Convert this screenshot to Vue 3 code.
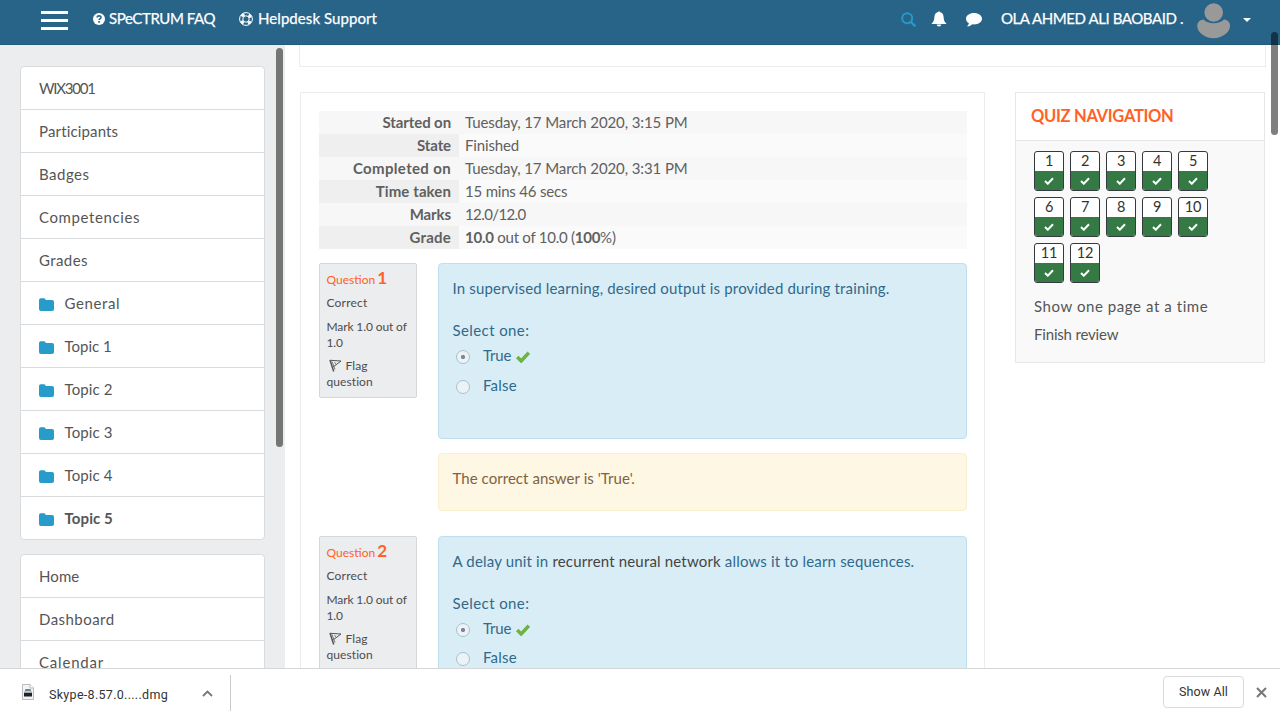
<script setup>
// Each label carries its own tracking in pixels.
const courseLinks = [['WIX3001', -1.2], ['Participants', 0.15], ['Badges', 0.5], ['Competencies', 0.6], ['Grades', 0.4]]
const topics = [['General', 0.6], ['Topic 1', 0], ['Topic 2', 0.1], ['Topic 3', 0.1], ['Topic 4', 0.1], ['Topic 5', 0.1]]
const siteLinks = [['Home', 0.1], ['Dashboard', 0.45], ['Calendar', 0.8]]
const summary = [
  ['Started on', -0.1, 'Tuesday, 17 March 2020, 3:15 PM', -0.1],
  ['State', -0.1, 'Finished', -0.15],
  ['Completed on', 0.35, 'Tuesday, 17 March 2020, 3:31 PM', -0.1],
  ['Time taken', 0.1, '15 mins 46 secs', -0.2],
  ['Marks', -0.1, '12.0/12.0', -0.6],
]
const questions = [
  { n: 1, parts: ['In supervised learning, desired output is provided during training.', '', ''] },
  { n: 2, parts: ['A delay unit in ', 'recurrent neural network', ' allows it to learn sequences.'] },
]
const track = (v) => ({ letterSpacing: v + 'px' })
</script>

<template>
  <div class="window">
    <header class="topbar">
      <div class="burger"><i></i><i></i><i></i></div>
      <div class="toplink faq">
        <svg width="12" height="12" viewBox="0 0 12 12"><circle cx="6" cy="6" r="6" fill="#fff" /><path d="M4 4.5C4.2 2.3 8 2.3 8 4.4C8 5.7 6.1 5.5 6.1 7.1" fill="none" stroke="#276488" stroke-width="1.6" /><rect x="5.2" y="8" width="1.7" height="1.7" fill="#276488" /></svg>
        <span>SPeCTRUM FAQ</span>
      </div>
      <div class="toplink help">
        <svg width="14" height="14" viewBox="0 0 14 14" fill="none" stroke="#fff"><circle cx="7" cy="7" r="6.4" stroke-width="1" /><circle cx="7" cy="7" r="3.2" stroke-width="1" /><circle cx="7" cy="7" r="4.8" stroke-width="2.8" stroke-dasharray="3.2 4.34" stroke-dashoffset="-2.17" /></svg>
        <span>Helpdesk Support</span>
      </div>
      <div class="userarea">
        <svg class="search" width="15" height="15" viewBox="0 0 15 15" fill="none" stroke="#2799c7" stroke-width="2"><circle cx="6.2" cy="6.2" r="5" /><path d="M9.8 9.8L13.6 13.6" stroke-width="2.5" stroke-linecap="round" /></svg>
        <svg class="bell" width="16" height="16" viewBox="0 0 16 16" fill="#fff"><path d="M7.2 1a.8.8 0 0 1 1.6 0c2.8.5 3.6 2.5 3.800 5 .2 3.200.9 5 2.700 6.500V13H.7v-.5C2.500 11 3.200 9.200 3.400 6c.2-2.500 1-4.500 3.800-5z" /><path d="M5.700 13.500h4.600a2.300 2 0 0 1-4.600 0z" /></svg>
        <svg class="chat" width="16" height="14" viewBox="0 0 16 14" fill="#fff"><path d="M8 0C12.500 0 16 2.500 16 5.700S12.500 11.400 8 11.400c-.6 0-1.100 0-1.600-.1-1.400 1.300-3 2-4.700 2.200-.5 0-.5-.5-.2-.7.900-.8 1.300-1.600 1.400-2.500C1.100 9.200 0 7.600 0 5.700 0 2.500 3.500 0 8 0z" /></svg>
        <span class="username">OLA AHMED ALI BAOBAID .</span>
        <svg class="avatar" width="34" height="36" viewBox="0 0 34 36" fill="#999"><circle cx="16.700" cy="9.500" r="9.300" /><path d="M6.500 16.500C9 19 12.500 20.300 16.700 20.300S24.500 19 27 16.500C31 17 33 19.500 33 23c0 6.500-8 12.200-16.500 12.200S.3 29.500.3 23c0-3.500 2.200-6 6.200-6.500z" /></svg>
        <i class="caret"></i>
      </div>
    </header>

    <div class="body">
      <aside class="sidebar">
        <nav class="menu">
          <div v-for="l in courseLinks" :key="l[0]" class="row" :style="track(l[1])">{{ l[0] }}</div>
          <div v-for="t in topics" :key="t[0]" class="row" :class="{ current: t[0] === 'Topic 5' }" :style="track(t[1])">
            <svg width="15" height="13" viewBox="0 0 15 13"><path d="M0 2Q0 .3 1.700.3H5Q6.700.3 6.700 2H13Q15 2 15 4v7q0 2-2 2H2q-2 0-2-2z" fill="#279bc9" /></svg>
            <span>{{ t[0] }}</span>
          </div>
        </nav>
        <nav class="menu">
          <div v-for="l in siteLinks" :key="l[0]" class="row" :style="track(l[1])">{{ l[0] }}</div>
        </nav>
        <i class="sidescroll"></i>
      </aside>

      <main class="page">
        <div class="heading-card"></div>
        <div class="columns">
          <section class="quiz">
            <table class="summary">
              <tbody>
                <tr v-for="s in summary" :key="s[0]"><th :style="track(s[1])">{{ s[0] }}</th><td :style="track(s[3])">{{ s[2] }}</td></tr>
                <tr><th>Grade</th><td class="grade"><b>10.0</b> out of 10.0 (<b>100</b>%)</td></tr>
              </tbody>
            </table>
            <div v-for="q in questions" :key="q.n" class="question" :class="'q' + q.n">
              <div class="info">
                <h3>Question <b>{{ q.n }}</b></h3>
                <p class="state">Correct</p>
                <p class="mark">Mark 1.0 out of<br>1.0</p>
                <p class="flag"><svg width="13" height="13" viewBox="0 0 13 13" fill="none" stroke="#555"><path d="M1 1L4.700 12.500" stroke-width="1.500" /><path d="M1.500 1.300L12 2L4.300 7.800" /><path d="M3 2.500L6 10.500" stroke-width=".8" /><path d="M5.500 3L7 5.500" stroke-width=".7" /></svg><span>Flag</span><br>question</p>
              </div>
              <div class="content">
                <div class="formulation">
                  <p class="qtext"><span>{{ q.parts[0] }}</span><em>{{ q.parts[1] }}</em><span>{{ q.parts[2] }}</span></p>
                  <p class="prompt">Select one:</p>
                  <div class="answer">
                    <i class="radio on"></i><span class="true">True</span>
                    <svg width="14" height="12" viewBox="0 0 14 12"><path d="M1.200 6L5.200 10L12.800 1.700" fill="none" stroke="#6cb33f" stroke-width="3.400" /></svg>
                  </div>
                  <div class="answer second"><i class="radio"></i><span>False</span></div>
                </div>
                <div class="outcome">The correct answer is 'True'.</div>
              </div>
            </div>
          </section>

          <section class="quiznav">
            <h2>QUIZ NAVIGATION</h2>
            <div class="navbody">
              <div class="buttons">
                <div v-for="n in 12" :key="n" class="qbtn">
                  <span>{{ n }}</span>
                  <div><svg width="10" height="8" viewBox="0 0 10 8"><path d="M1 4L3.800 6.700L9 1.200" fill="none" stroke="#fff" stroke-width="2" /></svg></div>
                </div>
              </div>
              <p class="navlink">Show one page at a time</p>
              <p class="navlink last">Finish review</p>
            </div>
          </section>
        </div>
      </main>
    </div>

    <i class="pagescroll"></i>

    <footer class="downloads">
      <div class="item">
        <svg width="12" height="16" viewBox="0 0 12 16"><path d="M.5.500H8L11.500 4V15.500H.5z" fill="#f4f4f4" stroke="#bbb" /><path d="M8 .5V4H11.500" fill="#fff" stroke="#bbb" /><path d="M3.500 5h5l1.300 4H2.200z" fill="#777e84" /><path d="M3.500 7h5l.7 1.500H2.800z" fill="#c7d4db" /><rect x="2" y="9" width="8" height="3.500" fill="#222" /><rect x="3" y="12" width="6" height="1" fill="#888" /></svg>
        <span class="filename">Skype-8.57.0.....dmg</span>
        <svg class="up" width="11" height="7" viewBox="0 0 11 7"><path d="M1 6L5.500 1.500L10 6" fill="none" stroke="#777" stroke-width="1.800" /></svg>
      </div>
      <div class="showall">Show All</div>
      <svg class="close" width="11" height="11" viewBox="0 0 11 11"><path d="M1 1L10 10M10 1L1 10" stroke="#777" stroke-width="2" /></svg>
    </footer>
  </div>
</template>

<style>
html, body { overflow: hidden; }
</style>

<style scoped>
* { box-sizing: border-box; }
.window { position: relative; width: 1280px; height: 717px; overflow: hidden; display: flex; flex-direction: column; background: #fff; color: #555; font: 15px/23px Lato, "Liberation Sans", sans-serif; letter-spacing: .2px; white-space: nowrap; }
p, h2, h3 { margin: 0; font-weight: normal; }
svg { display: block; flex: none; }

.topbar { height: 45px; flex: none; background: #276488; color: #fff; display: flex; align-items: flex-start; padding-left: 41px; border-bottom: 1px solid #235a7b; }
.burger { width: 27px; margin-top: 11px; display: flex; flex-direction: column; gap: 5px; }
.burger i { height: 3px; background: #fff; }
.toplink { display: flex; align-items: center; height: 23px; margin-top: 7px; gap: 4px; letter-spacing: .07px; -webkit-text-stroke: .25px #fff; }
.faq { margin-left: 25px; width: 146px; letter-spacing: -.42px; }
.help { gap: 5px; }
.userarea { margin-left: auto; display: flex; width: 379px; align-items: flex-start; }
.search { margin-top: 12px; }
.bell { margin: 11px 0 0 15px; }
.chat { margin: 13px 0 0 19px; }
.username { margin: 7px 0 0 19px; width: 196px; letter-spacing: -.42px; -webkit-text-stroke: .25px #fff; }
.avatar { margin-top: 3px; }
.caret { margin: 18px 0 0 12px; border: 4px solid transparent; border-top-color: #fff; border-bottom: 0; }

.body { flex: 1; min-height: 0; display: flex; overflow: hidden; }
.sidebar { position: relative; width: 285px; flex: none; background: #ecedef; padding: 21px 20px 0; overflow: hidden; }
.menu { width: 245px; border: 1px solid #dadbdc; border-radius: 4px; background: #fff; margin-bottom: 14px; }
.row { height: 43px; padding: 0 18px; display: flex; align-items: center; border-bottom: 1px solid #dadbdc; }
.row:last-child { height: 42px; border-bottom: 0; }
.row svg { margin: 2px 10.500px 0 0; }
.current { font-weight: bold; }
.sidescroll { position: absolute; left: 276px; top: 3px; width: 7px; height: 399px; border-radius: 4px; background: #747675; }

.page { flex: 1; padding-left: 14px; }
.heading-card { width: 967px; height: 22px; border: 1px solid #ebecec; border-top: 0; }
.columns { display: flex; gap: 30px; align-items: flex-start; padding: 25px 0 0 1px; }
.quiz { width: 685px; height: 900px; border: 1px solid #ebecec; padding: 18px 17px 0 18px; }
.summary { width: 648px; border-collapse: collapse; color: #606060; }
.summary tr { height: 23px; background: #f7f7f7; }
.summary tr:nth-child(even) { background: #fafafa; }
.summary tr:nth-child(even) th { background: #efefef; }
.summary th { width: 140px; padding: 0 8px 0 0; text-align: right; }
.summary td { padding: 0 0 0 6px; }
.summary .grade { letter-spacing: -.25px; }
.question { display: flex; gap: 21px; align-items: flex-start; margin-top: 14px; }
.q2 { margin-top: 25px; }
.info { width: 98px; height: 135px; border: 1px solid #d5d8da; border-radius: 2px; background: #ecedef; padding: 4px 0 0 6.500px; font-size: 12px; line-height: 16px; color: #4c4c4c; }
.info h3 { font-size: 12px; line-height: 24px; height: 24px; color: #ff6127; letter-spacing: 0; word-spacing: -1px; }
.info h3 b { font-size: 17px; line-height: 20px; }
.info .state { margin-top: 3px; }
.info .mark { margin-top: 8px; letter-spacing: -.12px; }
.info .flag { margin-top: 7px; letter-spacing: .08px; }
.flag svg { display: inline-block; vertical-align: -2px; margin: 0 4px 0 2px; }
.content { width: 529px; }
.formulation { height: 176px; border: 1px solid #bce0ee; border-radius: 4px; background: #d9edf6; color: #31698a; padding: 13px 0 0 13.500px; }
.qtext { letter-spacing: .17px; }
.qtext em { font-style: normal; color: #444; }
.prompt { margin-top: 19px; letter-spacing: .4px; }
.answer { display: flex; align-items: center; height: 23px; margin-top: 2px; }
.second { margin-top: 7px; }
.q2 .second { margin-top: 6px; }
.radio { width: 14px; height: 14px; margin: 2px 13px 0 3.500px; border: 1px solid #b0bec5; border-radius: 50%; background: #eaf3f8; }
.on { background: radial-gradient(circle, #7e878c 0 1.800px, #eaf3f8 2.400px); }
.true { width: 28px; letter-spacing: -.2px; }
.answer svg { margin: 2px 0 0 4.500px; }
.outcome { margin-top: 14px; height: 58px; border: 1px solid #faf0cd; border-radius: 4px; background: #fdf7e3; color: #7d6344; padding: 13px 0 0 13.500px; letter-spacing: .05px; }

.quiznav { width: 250px; height: 271px; border: 1px solid #e6e7e7; background: #f9f9f9; }
.quiznav h2 { height: 48px; padding-left: 15px; line-height: 46px; border-bottom: 1px solid #e6e7e7; background: #fff; color: #ff6127; font-size: 16.500px; font-weight: bold; letter-spacing: -.3px; }
.navbody { padding: 10px 18px 0; }
.buttons { display: flex; flex-wrap: wrap; gap: 6px; width: 180px; }
.qbtn { width: 30px; height: 40px; border: 1px solid #343a40; border-radius: 3px; overflow: hidden; background: #fff; color: #333; display: flex; flex-direction: column; text-align: center; font-size: 14.500px; letter-spacing: -.2px; }
.qbtn span { height: 19px; line-height: 18px; }
.qbtn div { flex: 1; background: #357945; display: flex; align-items: center; justify-content: center; }
.navlink { margin-top: 12px; height: 23px; letter-spacing: .57px; }
.last { margin-top: 5px; letter-spacing: -.18px; }

.pagescroll { position: absolute; left: 1271px; top: 32px; width: 7px; height: 103px; border-radius: 4px; background: rgba(0, 0, 0, .5); }

.downloads { height: 49px; flex: none; border-top: 1px solid #d5d6d8; background: #fff; display: flex; align-items: flex-start; padding: 6px 13px 0 22px; font: 12.500px/20px Roboto, sans-serif; letter-spacing: .2px; color: #333; }
.item { display: flex; align-items: center; width: 209px; height: 36px; border-right: 1px solid #c9cacb; }
.item svg:first-child { margin: -3px 15px 0 0; }
.filename { margin-top: 3px; letter-spacing: .3px; }
.item .up { margin: 0 17px 0 auto; }
.showall { margin: 1px 0 0 auto; width: 81px; height: 32px; border: 1px solid #d8d9dc; border-radius: 4px; text-align: center; line-height: 30px; letter-spacing: .1px; }
.close { margin: 12px 0 0 12px; }
</style>
